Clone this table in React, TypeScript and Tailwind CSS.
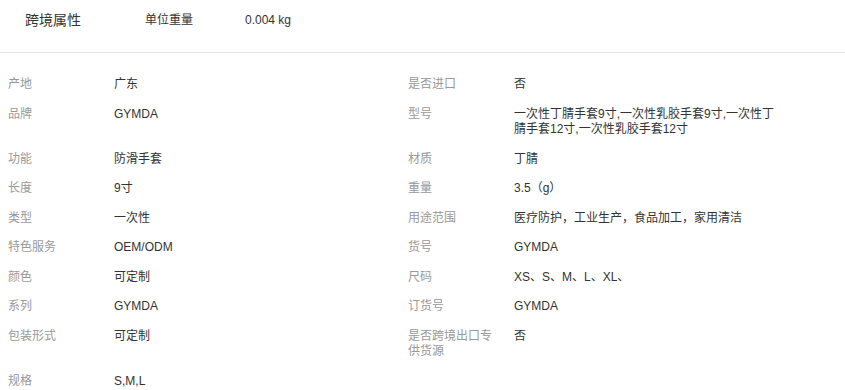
import React from 'react';

const rows: [string, string][] = [
  ['产地', '广东'],
  ['是否进口', '否'],
  ['品牌', 'GYMDA'],
  ['型号', '一次性丁腈手套9寸,一次性乳胶手套9寸,一次性丁腈手套12寸,一次性乳胶手套12寸'],
  ['功能', '防滑手套'],
  ['材质', '丁腈'],
  ['长度', '9寸'],
  ['重量', '3.5（g）'],
  ['类型', '一次性'],
  ['用途范围', '医疗防护，工业生产，食品加工，家用清洁'],
  ['特色服务', 'OEM/ODM'],
  ['货号', 'GYMDA'],
  ['颜色', '可定制'],
  ['尺码', 'XS、S、M、L、XL、'],
  ['系列', 'GYMDA'],
  ['订货号', 'GYMDA'],
  ['包装形式', '可定制'],
  ['是否跨境出口专供货源', '否'],
  ['规格', 'S,M,L'],
];

function AttrRow({ label, value }: { label: string; value: string }) {
  return (
    <div className="flex items-start pl-[8px] py-[7px] text-[12px] leading-[15.5px]">
      <div className="w-[90px] mr-[16px] shrink-0 text-[#999999]">{label}</div>
      <div className="w-[268px] text-[#333333] break-all">{value}</div>
    </div>
  );
}

export default function App() {
  return (
    <div
      className="w-[845px] h-[390px] overflow-hidden bg-white"
      style={{ fontFamily: '"Liberation Sans", Arial, "Noto Sans CJK SC", sans-serif' }}
    >
      <div className="flex items-center h-[53px] pb-[13px] border-b border-[#e5e5e5] text-[#333333]">
        <div className="pl-[25px] w-[145px] text-[14px] leading-[18px]">跨境属性</div>
        <div className="w-[100px] text-[12px] leading-[18px]">单位重量</div>
        <div className="text-[12px] leading-[18px]">0.004 kg</div>
      </div>
      <div className="grid grid-cols-[400px_400px] pt-[17px]">
        {rows.map(([label, value]) => (
          <AttrRow key={label} label={label} value={value} />
        ))}
      </div>
    </div>
  );
}
